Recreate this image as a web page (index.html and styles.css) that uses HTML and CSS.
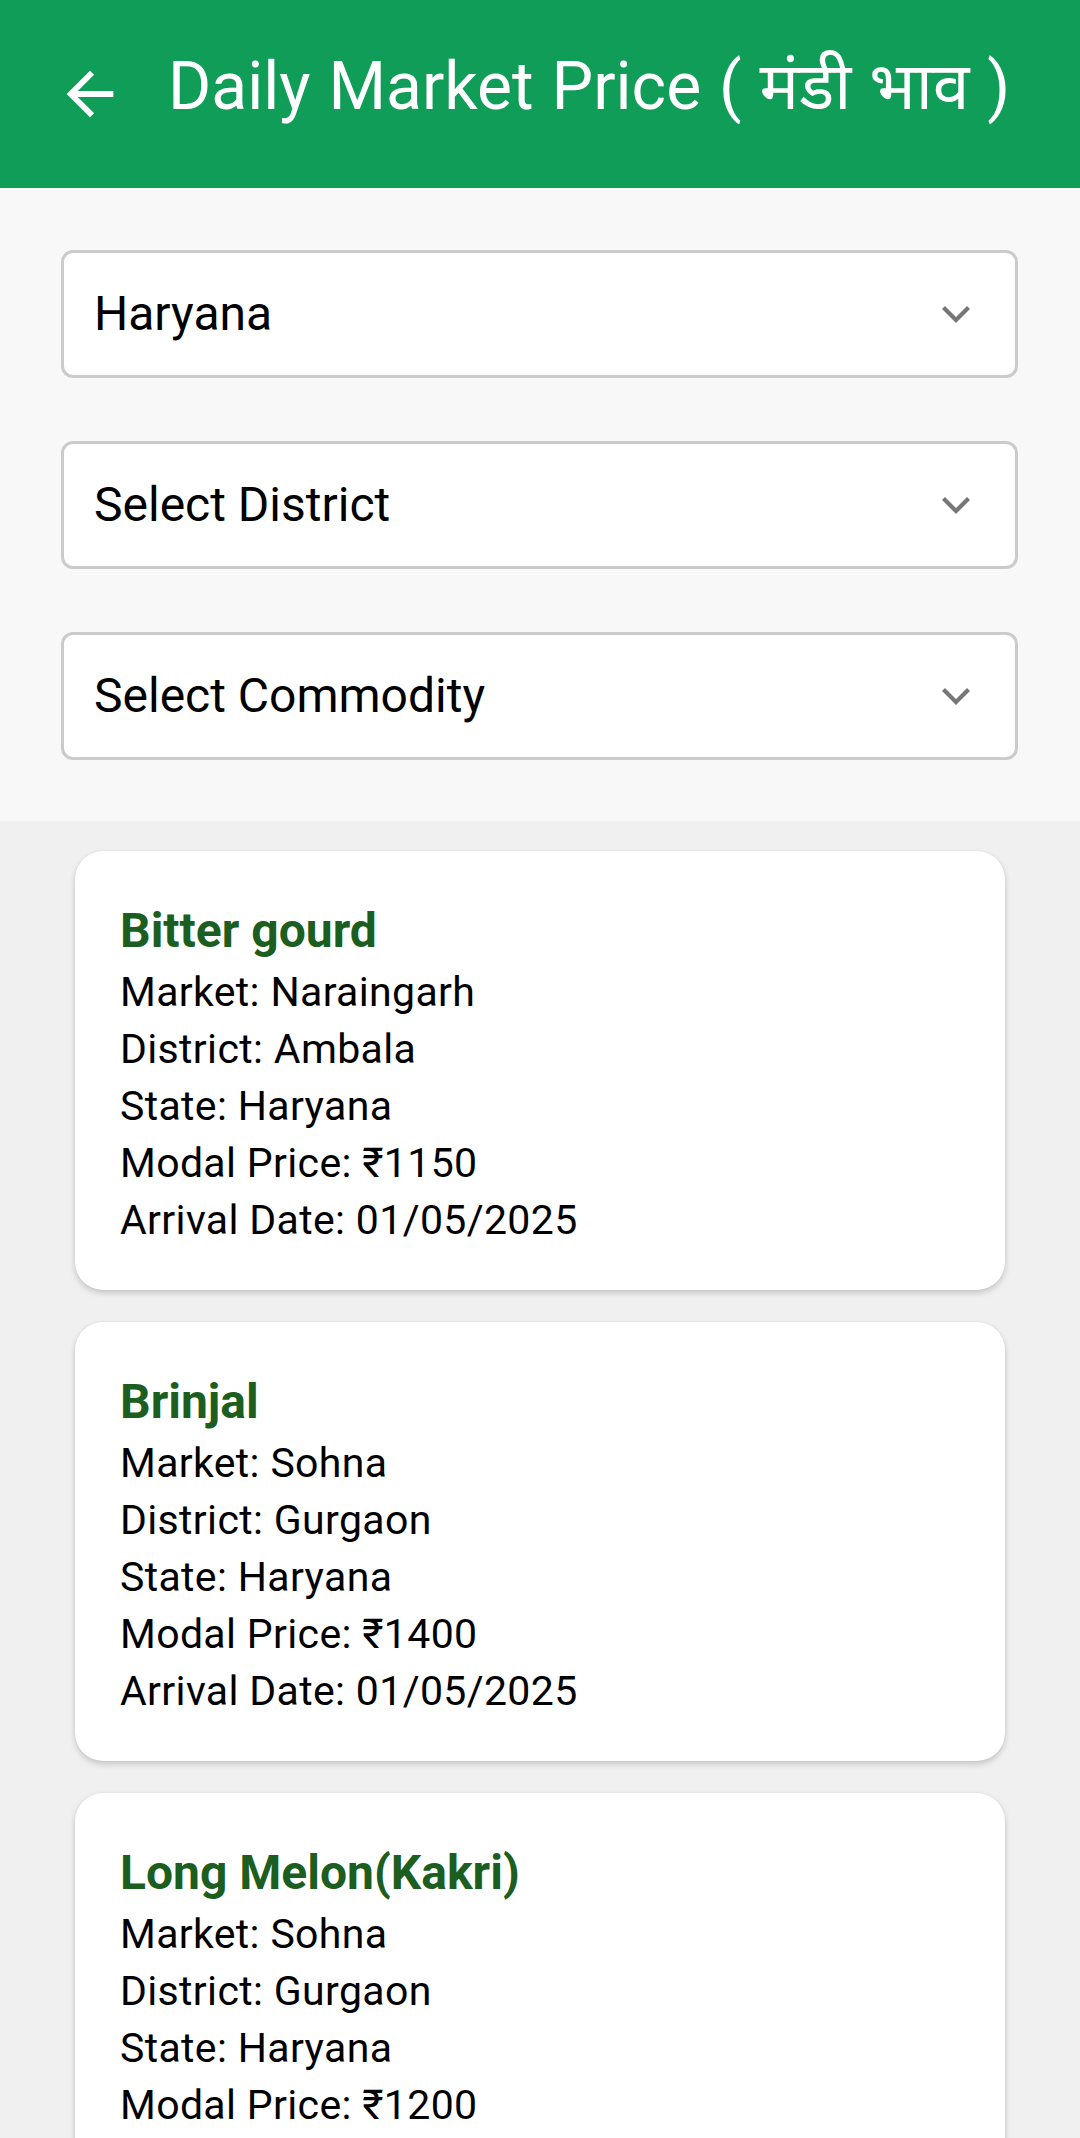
FILE: index.html
```html
<!DOCTYPE html>
<html lang="en">
<head>
<meta charset="utf-8">
<title>Daily Market Price</title>
<link rel="stylesheet" href="styles.css">
</head>
<body>
<div class="app">
  <header class="appbar">
    <svg class="back" viewBox="0 0 24 24" width="70" height="70" aria-hidden="true">
      <path d="M20 11H7.83l5.59-5.59L12 4l-8 8 8 8 1.41-1.41L7.83 13H20v-2z" fill="#fff"/>
    </svg>
    <h1 class="title">Daily Market Price ( मंडी भाव )</h1>
  </header>

  <section class="filters">
    <div class="select">
      <span class="select-text">Haryana</span>
      <svg class="chev" width="30" height="18" viewBox="0 0 30 18" aria-hidden="true"><polyline points="2.5,2.5 15,15 27.5,2.5" fill="none" stroke="#777" stroke-width="4.2"/></svg>
    </div>
    <div class="select">
      <span class="select-text">Select District</span>
      <svg class="chev" width="30" height="18" viewBox="0 0 30 18" aria-hidden="true"><polyline points="2.5,2.5 15,15 27.5,2.5" fill="none" stroke="#777" stroke-width="4.2"/></svg>
    </div>
    <div class="select">
      <span class="select-text">Select Commodity</span>
      <svg class="chev" width="30" height="18" viewBox="0 0 30 18" aria-hidden="true"><polyline points="2.5,2.5 15,15 27.5,2.5" fill="none" stroke="#777" stroke-width="4.2"/></svg>
    </div>
  </section>

  <main class="list">
    <article class="card">
      <h2 class="card-title">Bitter gourd</h2>
      <p class="line">Market: Naraingarh</p>
      <p class="line">District: Ambala</p>
      <p class="line">State: Haryana</p>
      <p class="line">Modal Price: ₹1150</p>
      <p class="line">Arrival Date: 01/05/2025</p>
    </article>
    <article class="card">
      <h2 class="card-title">Brinjal</h2>
      <p class="line">Market: Sohna</p>
      <p class="line">District: Gurgaon</p>
      <p class="line">State: Haryana</p>
      <p class="line">Modal Price: ₹1400</p>
      <p class="line">Arrival Date: 01/05/2025</p>
    </article>
    <article class="card">
      <h2 class="card-title">Long Melon(Kakri)</h2>
      <p class="line">Market: Sohna</p>
      <p class="line">District: Gurgaon</p>
      <p class="line">State: Haryana</p>
      <p class="line">Modal Price: ₹1200</p>
      <p class="line">Arrival Date: 01/05/2025</p>
    </article>
  </main>
</div>
</body>
</html>
```

FILE: styles.css
```css
* { box-sizing: border-box; }

html, body {
  margin: 0;
  padding: 0;
}

body {
  font-family: Roboto, "Noto Sans", "Liberation Sans", sans-serif;
  background: #f0f0f0;
  color: #000;
  width: 1080px;
  height: 2138px;
  overflow: hidden;
}

.appbar {
  height: 188px;
  background: #0f9d58;
  display: flex;
  align-items: center;
  padding-left: 55px;
}

.back {
  flex: none;
  display: block;
}

.title {
  margin: 0 0 0 43px;
  font-size: 66px;
  font-weight: 400;
  word-spacing: 1.5px;
  color: #fff;
  line-height: 1;
  white-space: nowrap;
  position: relative;
  top: -7px;
}

.filters {
  background: #f8f8f8;
  padding: 62px 62px 61px 61px;
  display: flex;
  flex-direction: column;
  gap: 63px;
}

.select {
  height: 128px;
  background: #fff;
  border: 3px solid #cbcbcb;
  border-radius: 12px;
  display: flex;
  align-items: center;
  justify-content: space-between;
  padding: 0 44px 0 30px;
}

.select-text {
  font-size: 48px;
  line-height: 1;
  color: #000;
}

.chev {
  display: block;
  flex: none;
}

.list {
  padding: 30px 75px 0 75px;
  display: flex;
  flex-direction: column;
  gap: 32px;
}

.card {
  background: #fff;
  border-radius: 28px;
  box-shadow: 0 3px 6px rgba(0, 0, 0, 0.18), 0 0 2px rgba(0, 0, 0, 0.06);
  padding: 52px 45px 41px 45px;
}

.card-title {
  margin: 0 0 5px 0;
  font-size: 48px;
  line-height: 56px;
  font-weight: 700;
  color: #1b5e20;
}

.line {
  margin: 0;
  font-size: 41px;
  letter-spacing: 0.35px;
  line-height: 57px;
  color: #000;
}
```
